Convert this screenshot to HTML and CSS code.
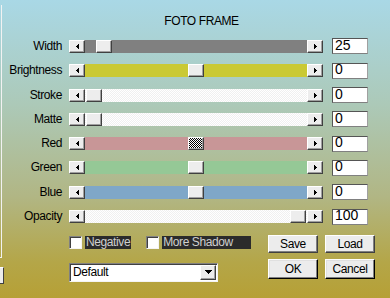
FILE: index.html
```html
<!DOCTYPE html>
<html lang="en">

<head>
  <meta charset="UTF-8">
  <meta name="viewport" content="width=device-width, initial-scale=1.0">
  <title>Foto Frame</title>
  <link rel="stylesheet" href="styles.css">
</head>

<body>
  <div class="dialog">
    <div class="side">
      <div class="side-group"></div>
      <div class="side-button"></div>
    </div>

    <div class="main">
      <h1 class="title">FOTO FRAME</h1>

      <div class="sliders">
        <div class="slider-row">
          <span class="slider-label">Width</span>
          <div class="scrollbar track-gray">
            <span class="sb-btn"><svg width="3" height="5" viewBox="0 0 3 5"><path d="M2 0h1v5h-1zM1 1h1v3h-1zM0 2h1v1h-1z" /></svg></span>
            <div class="sb-track"><span class="sb-thumb" style="margin-left: 11px"></span></div>
            <span class="sb-btn"><svg width="3" height="5" viewBox="0 0 3 5"><path d="M0 0h1v5h-1zM1 1h1v3h-1zM2 2h1v1h-1z" /></svg></span>
          </div>
          <input class="value" type="text" value="25">
        </div>

        <div class="slider-row">
          <span class="slider-label">Brightness</span>
          <div class="scrollbar track-yellow">
            <span class="sb-btn"><svg width="3" height="5" viewBox="0 0 3 5"><path d="M2 0h1v5h-1zM1 1h1v3h-1zM0 2h1v1h-1z" /></svg></span>
            <div class="sb-track"><span class="sb-thumb" style="margin-left: 103px"></span></div>
            <span class="sb-btn"><svg width="3" height="5" viewBox="0 0 3 5"><path d="M0 0h1v5h-1zM1 1h1v3h-1zM2 2h1v1h-1z" /></svg></span>
          </div>
          <input class="value" type="text" value="0">
        </div>

        <div class="slider-row">
          <span class="slider-label">Stroke</span>
          <div class="scrollbar track-light">
            <span class="sb-btn"><svg width="3" height="5" viewBox="0 0 3 5"><path d="M2 0h1v5h-1zM1 1h1v3h-1zM0 2h1v1h-1z" /></svg></span>
            <div class="sb-track"><span class="sb-thumb" style="margin-left: 1px"></span></div>
            <span class="sb-btn"><svg width="3" height="5" viewBox="0 0 3 5"><path d="M0 0h1v5h-1zM1 1h1v3h-1zM2 2h1v1h-1z" /></svg></span>
          </div>
          <input class="value" type="text" value="0">
        </div>

        <div class="slider-row">
          <span class="slider-label">Matte</span>
          <div class="scrollbar track-light">
            <span class="sb-btn"><svg width="3" height="5" viewBox="0 0 3 5"><path d="M2 0h1v5h-1zM1 1h1v3h-1zM0 2h1v1h-1z" /></svg></span>
            <div class="sb-track"><span class="sb-thumb" style="margin-left: 1px"></span></div>
            <span class="sb-btn"><svg width="3" height="5" viewBox="0 0 3 5"><path d="M0 0h1v5h-1zM1 1h1v3h-1zM2 2h1v1h-1z" /></svg></span>
          </div>
          <input class="value" type="text" value="0">
        </div>

        <div class="slider-row">
          <span class="slider-label">Red</span>
          <div class="scrollbar track-red">
            <span class="sb-btn"><svg width="3" height="5" viewBox="0 0 3 5"><path d="M2 0h1v5h-1zM1 1h1v3h-1zM0 2h1v1h-1z" /></svg></span>
            <div class="sb-track"><span class="sb-thumb is-focus" style="margin-left: 103px"></span></div>
            <span class="sb-btn"><svg width="3" height="5" viewBox="0 0 3 5"><path d="M0 0h1v5h-1zM1 1h1v3h-1zM2 2h1v1h-1z" /></svg></span>
          </div>
          <input class="value" type="text" value="0">
        </div>

        <div class="slider-row">
          <span class="slider-label">Green</span>
          <div class="scrollbar track-green">
            <span class="sb-btn"><svg width="3" height="5" viewBox="0 0 3 5"><path d="M2 0h1v5h-1zM1 1h1v3h-1zM0 2h1v1h-1z" /></svg></span>
            <div class="sb-track"><span class="sb-thumb" style="margin-left: 103px"></span></div>
            <span class="sb-btn"><svg width="3" height="5" viewBox="0 0 3 5"><path d="M0 0h1v5h-1zM1 1h1v3h-1zM2 2h1v1h-1z" /></svg></span>
          </div>
          <input class="value" type="text" value="0">
        </div>

        <div class="slider-row">
          <span class="slider-label">Blue</span>
          <div class="scrollbar track-blue">
            <span class="sb-btn"><svg width="3" height="5" viewBox="0 0 3 5"><path d="M2 0h1v5h-1zM1 1h1v3h-1zM0 2h1v1h-1z" /></svg></span>
            <div class="sb-track"><span class="sb-thumb" style="margin-left: 103px"></span></div>
            <span class="sb-btn"><svg width="3" height="5" viewBox="0 0 3 5"><path d="M0 0h1v5h-1zM1 1h1v3h-1zM2 2h1v1h-1z" /></svg></span>
          </div>
          <input class="value" type="text" value="0">
        </div>

        <div class="slider-row">
          <span class="slider-label">Opacity</span>
          <div class="scrollbar track-light">
            <span class="sb-btn"><svg width="3" height="5" viewBox="0 0 3 5"><path d="M2 0h1v5h-1zM1 1h1v3h-1zM0 2h1v1h-1z" /></svg></span>
            <div class="sb-track"><span class="sb-thumb" style="margin-left: 205px"></span></div>
            <span class="sb-btn"><svg width="3" height="5" viewBox="0 0 3 5"><path d="M0 0h1v5h-1zM1 1h1v3h-1zM2 2h1v1h-1z" /></svg></span>
          </div>
          <input class="value" type="text" value="100">
        </div>
      </div>

      <div class="bottom">
        <div class="checks">
          <label class="check-item">
            <input class="check" type="checkbox">
            <span class="check-label">Negative</span>
          </label>
          <label class="check-item">
            <input class="check" type="checkbox">
            <span class="check-label check-label-wide">More Shadow</span>
          </label>
        </div>
        <button class="btn">Save</button>
        <button class="btn">Load</button>

        <div class="select">
          <span class="select-value">Default</span>
          <span class="select-btn"><svg width="7" height="4" viewBox="0 0 7 4"><path d="M0 0h7v1h-1v1h-1v1h-1v1h-1v-1h-1v-1h-1v-1h-1z" /></svg></span>
        </div>
        <button class="btn btn-default">OK</button>
        <button class="btn btn-default">Cancel</button>
      </div>
    </div>
  </div>
</body>

</html>
```

FILE: styles.css
```css
html {
  box-sizing: border-box;
}

*,
*:before,
*:after {
  box-sizing: inherit;
}

body {
  margin: 0;
  width: 390px;
  height: 298px;
  overflow: hidden;
  font-family: "Liberation Sans", Arial, sans-serif;
  font-size: 12px;
  letter-spacing: -0.4px;
  color: #000;
  background: linear-gradient(180deg, #a9d8e6 0%, #acc9b8 35%, #b1b684 66%, #b4a648 88%, #b6a036 100%);
}

.dialog {
  display: flex;
  height: 298px;
}

/* part of a panel cut off at the left */
.side {
  flex: none;
  width: 4px;
  display: flex;
  flex-direction: column;
  overflow: hidden;
}

.side-group {
  margin-top: 5px;
  width: 2px;
  height: 253px;
  border-right: 1px solid #f2f2f2;
  border-bottom: 1px solid #f2f2f2;
}

.side-button {
  margin-top: 9px;
  width: 4px;
  height: 17px;
  background: #ececec;
  border: 1px solid;
  border-left: none;
  border-color: #fff #404040 #404040 #fff;
}

.main {
  flex: 1;
}

.title {
  margin: 0;
  padding: 14px 0 0 9px;
  font-size: 12px;
  font-weight: normal;
  line-height: 15px;
  text-align: center;
}

/* sliders */
.sliders {
  margin-top: 5.35px;
}

.slider-row {
  display: flex;
  align-items: center;
  height: 24.3px;
}

.slider-label {
  width: 58px;
  margin-right: 7px;
  text-align: right;
  line-height: 13px;
}

.scrollbar {
  display: flex;
  width: 254px;
  height: 13px;
}

.sb-btn,
.sb-thumb {
  flex: none;
  width: 16px;
  height: 13px;
  background: #ededed;
  border: 1px solid;
  border-color: #fff #404040 #404040 #fff;
  box-shadow: inset -1px -1px #a0a0a0;
}

.sb-btn {
  display: flex;
  align-items: center;
  justify-content: center;
}

.sb-btn svg {
  display: block;
  shape-rendering: crispEdges;
}

.sb-thumb {
  display: block;
}

.sb-thumb.is-focus {
  background: repeating-conic-gradient(#000 0 25%, #fff 0 50%) 0 0 / 2px 2px;
}

.sb-track {
  flex: 1;
  display: flex;
  background: var(--track);
}

.track-gray {
  --track: #808080;
}

.track-yellow {
  --track: #cac934;
}

.track-red {
  --track: #c89697;
}

.track-green {
  --track: #95c896;
}

.track-blue {
  --track: #7fa7c8;
}

.track-light {
  --track: repeating-conic-gradient(#f0f0f0 0 25%, #fff 0 50%) 0 0 / 2px 2px;
}

.value {
  width: 36px;
  height: 16px;
  margin: 0 0 0 9px;
  padding: 0 2px 3px;
  font-family: "Liberation Sans", Arial, sans-serif;
  font-size: 14px;
  letter-spacing: 0;
  color: #000;
  background: #fff;
  border: 1px solid;
  border-color: #555 #a0a0a0 #808080 #555;
  border-radius: 0;
  outline: none;
}

/* bottom controls */
.bottom {
  display: grid;
  grid-template-columns: 192px 50px 50px;
  grid-template-rows: 18px 24px;
  column-gap: 7px;
  row-gap: 6px;
  margin-top: 6.25px;
  padding-left: 65px;
}

.checks {
  display: flex;
  gap: 15px;
  padding-top: 1px;
}

.check-item {
  display: flex;
  gap: 3px;
  height: 13px;
}

.check {
  appearance: none;
  margin: 0;
  width: 13px;
  height: 13px;
  background: #fff;
  border: 1px solid;
  border-color: #808080 #f4f4f4 #f4f4f4 #808080;
  box-shadow: inset 1px 1px #404040;
}

.check-label {
  padding: 0 1px;
  line-height: 13px;
  color: #cfcfcf;
  background: #2b2b2b;
}

.check-label-wide {
  width: 89px;
}

.btn {
  padding: 0;
  height: 18px;
  font-family: inherit;
  font-size: 12px;
  letter-spacing: -0.4px;
  color: #000;
  background: #ececec;
  border: 1px solid;
  border-color: #fff #404040 #404040 #fff;
  box-shadow: inset -1px -1px #808080;
}

.btn-default {
  height: 20px;
  border-color: #fff #000 #000 #fff;
  box-shadow: inset -1px -1px #808080, inset 1px 1px #e0e0e0;
}

.select {
  display: flex;
  align-items: center;
  justify-content: space-between;
  margin-top: 4px;
  width: 149px;
  height: 19px;
  padding-left: 3px;
  background: #fff;
  border: 1px solid;
  border-color: #808080 #f4f4f4 #f4f4f4 #808080;
  box-shadow: inset 1px 1px #404040;
}

.select-value {
  line-height: 15px;
}

.select-btn {
  display: flex;
  align-items: center;
  justify-content: center;
  width: 16px;
  height: 15px;
  margin-right: 1px;
  background: #ececec;
  border: 1px solid;
  border-color: #fff #404040 #404040 #fff;
  box-shadow: inset -1px -1px #a0a0a0;
}

.select-btn svg {
  display: block;
  shape-rendering: crispEdges;
}
```
